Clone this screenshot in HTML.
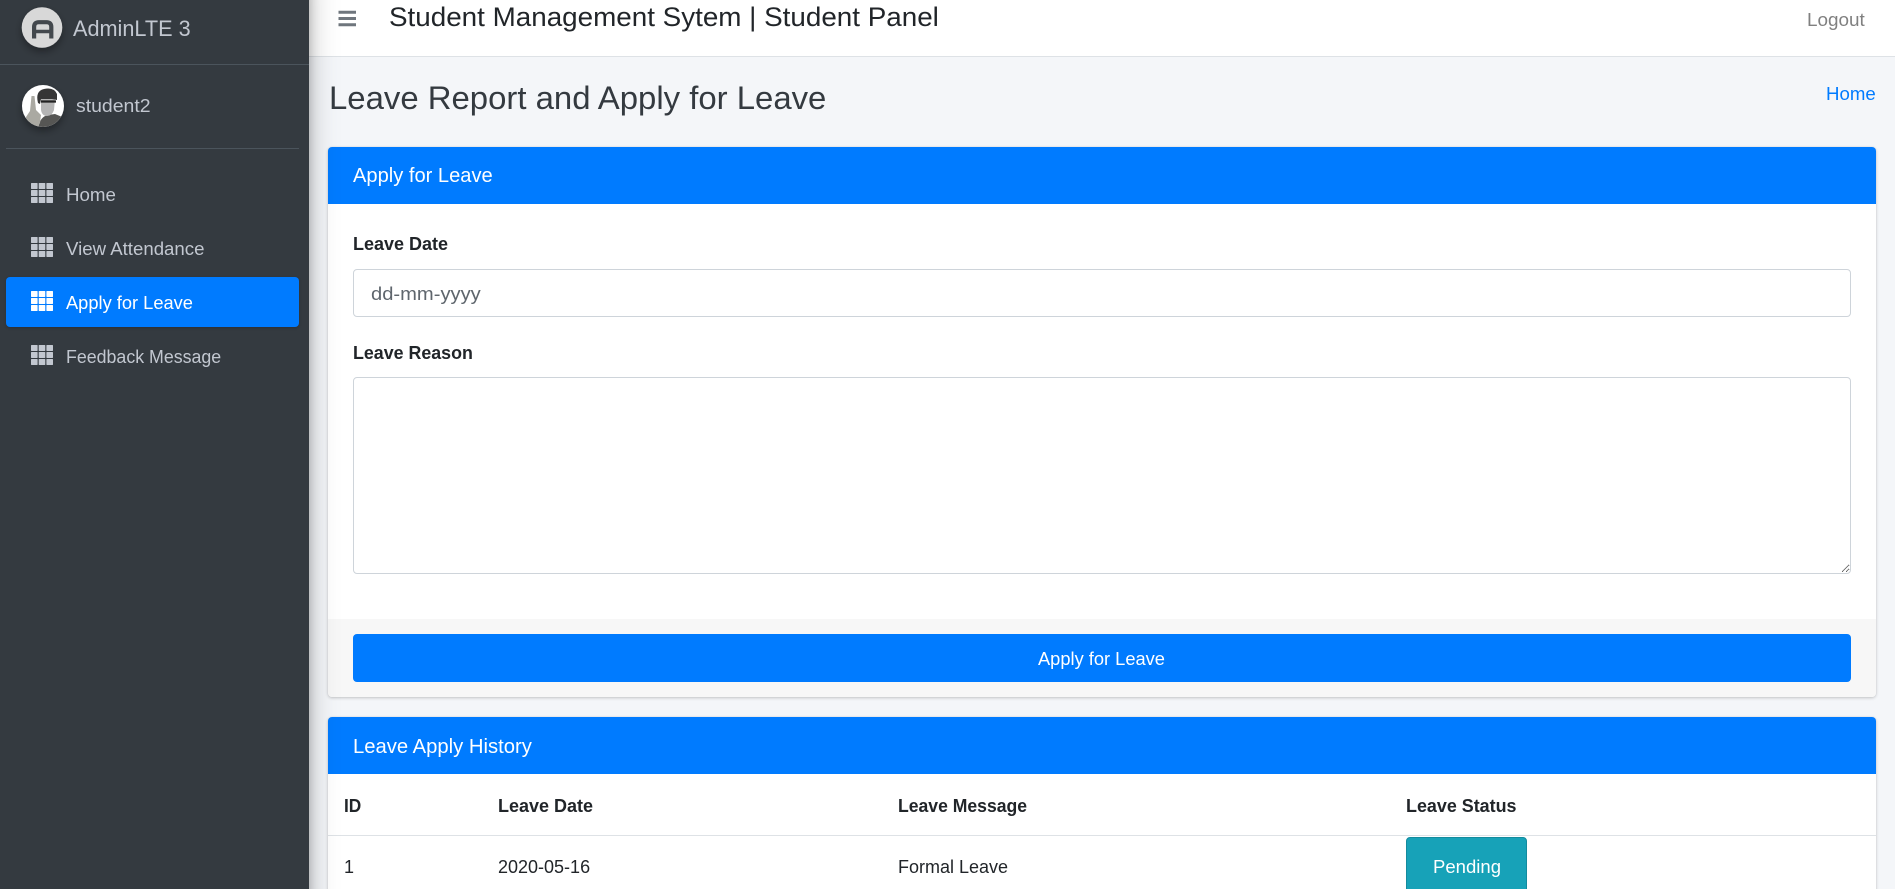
<!DOCTYPE html>
<html lang="en">
<head>
<meta charset="utf-8">
<title>Student Management Sytem | Student Panel</title>
<style>
*{box-sizing:border-box}
html,body{margin:0;padding:0;width:1895px;height:889px;overflow:hidden;background:#f4f6f9;font-family:"Liberation Sans",sans-serif;color:#212529}
#page{position:relative;width:1895px;height:889px;overflow:hidden;background:#f4f6f9}
.t{position:absolute;display:block;line-height:24px;height:24px;white-space:nowrap;font-size:18px;transform-origin:0 50%;margin:0;font-weight:400}
.b{font-weight:700}
#side{position:absolute;left:0;top:-40px;width:309px;height:969px;background:#343a40;box-shadow:0 14px 28px rgba(0,0,0,.25),0 10px 10px rgba(0,0,0,.22);z-index:5}
#sidein{position:absolute;left:0;top:40px;width:309px;height:889px}
#side .t{color:#c2c7d0}
.hr{position:absolute;height:1px;background:#4b545c}
.active{position:absolute;left:6px;top:277px;width:293px;height:50px;background:#007bff;border-radius:4px;box-shadow:0 1px 3px rgba(0,0,0,.2)}
.ic{position:absolute;left:31px;width:22px;height:20px}
#nav{position:absolute;left:309px;top:0;width:1586px;height:57px;background:#fff;border-bottom:1px solid #dee2e6}
.card{position:absolute;left:328px;width:1548px;background:#fff;border-radius:4px;box-shadow:0 0 1px rgba(0,0,0,.125),0 1px 3px rgba(0,0,0,.2)}
.head{position:absolute;left:0;top:0;width:100%;height:57px;background:#007bff;border-radius:4px 4px 0 0}
.foot{position:absolute;left:0;top:472px;width:100%;height:78px;background:#f7f7f7;border-radius:0 0 4px 4px}
.ctl{position:absolute;left:353px;width:1498px;background:#fff;border:1px solid #ced4da;border-radius:4px;display:block;margin:0;padding:0}
.btn{position:absolute;left:353px;top:634px;width:1498px;height:48px;background:#007bff;border-radius:4px}
.rule{position:absolute;left:328px;width:1548px;height:1px;background:#dee2e6}
.pend{position:absolute;left:1406px;top:837px;width:121px;height:70px;background:#17a2b8;border:1px solid #148b9e;border-radius:4px}
</style>
</head>
<body>
<div id="page">
<aside id="side"><div id="sidein">
  <svg style="position:absolute;left:14px;top:0" width="60" height="60" viewBox="14 0 60 60">
    <defs><filter id="s" x="-40%" y="-40%" width="180%" height="180%"><feDropShadow dx="0" dy="4" stdDeviation="4" flood-color="#000" flood-opacity=".35"/></filter></defs>
    <circle cx="42" cy="27.5" r="20.3" fill="#d8d8d8" filter="url(#s)"/>
    <path d="M34.100 38.500V27q0-4.800 4.800-4.800h7.600q4.800 0 4.800 4.800V38.500" fill="none" stroke="#43484d" stroke-width="4.200"/>
    <path d="M34 31.500H51" fill="none" stroke="#43484d" stroke-width="3.400"/>
  </svg>
  <span class="t" style="left:73px;top:17px;font-size:22px;transform:scaleX(.985)">AdminLTE 3</span>
  <div class="hr" style="left:0;top:64px;width:309px"></div>

  <svg style="position:absolute;left:14px;top:78px" width="60" height="60" viewBox="14 78 60 60">
    <defs>
      <filter id="s2" x="-40%" y="-40%" width="180%" height="180%"><feDropShadow dx="0" dy="4" stdDeviation="4" flood-color="#000" flood-opacity=".35"/></filter>
      <clipPath id="c"><circle cx="43" cy="106" r="21"/></clipPath>
    </defs>
    <circle cx="43" cy="106" r="21" fill="#fff" filter="url(#s2)"/>
    <g clip-path="url(#c)">
      <path d="M38 130q1-13 10-15l7-1 12 5v11z" fill="#565654"/>
      <path d="M41 99h14l-1 11q-2 6-7 6-5 0-6-6z" fill="#b5b5b5"/>
      <path d="M38 103q-3-12 6-14 10-2 13 5l0 6-5-1-7 0-4 0-1 5z" fill="#363636"/>
      <path d="M41 101.500h15" stroke="#222" stroke-width="2.200"/>
      <path d="M31.500 96l3 0 1.500 14 5 5-1 8-4 7-9-1-1-12 4-6z" fill="#aaa9a2"/>
    </g>
  </svg>
  <span class="t" style="left:76px;top:94px;transform:scaleX(1.08)">student2</span>
  <div class="hr" style="left:6px;top:148px;width:293px"></div>

  <svg class="ic" style="top:183px" viewBox="0 0 22 20"><g fill="#c2c7d0"><rect width="6.600" height="6" rx=".6"/><rect x="7.700" width="6.600" height="6" rx=".6"/><rect x="15.400" width="6.600" height="6" rx=".6"/><rect y="7" width="6.600" height="6" rx=".6"/><rect x="7.700" y="7" width="6.600" height="6" rx=".6"/><rect x="15.400" y="7" width="6.600" height="6" rx=".6"/><rect y="14" width="6.600" height="6" rx=".6"/><rect x="7.700" y="14" width="6.600" height="6" rx=".6"/><rect x="15.400" y="14" width="6.600" height="6" rx=".6"/></g></svg>
  <span class="t" style="left:66px;top:183px;transform:scaleX(1.04)">Home</span>

  <svg class="ic" style="top:237px" viewBox="0 0 22 20"><g fill="#c2c7d0"><rect width="6.600" height="6" rx=".6"/><rect x="7.700" width="6.600" height="6" rx=".6"/><rect x="15.400" width="6.600" height="6" rx=".6"/><rect y="7" width="6.600" height="6" rx=".6"/><rect x="7.700" y="7" width="6.600" height="6" rx=".6"/><rect x="15.400" y="7" width="6.600" height="6" rx=".6"/><rect y="14" width="6.600" height="6" rx=".6"/><rect x="7.700" y="14" width="6.600" height="6" rx=".6"/><rect x="15.400" y="14" width="6.600" height="6" rx=".6"/></g></svg>
  <span class="t" style="left:66px;top:237px;transform:scaleX(1.035)">View Attendance</span>

  <div class="active"></div>
  <svg class="ic" style="top:291px" viewBox="0 0 22 20"><g fill="#fff"><rect width="6.600" height="6" rx=".6"/><rect x="7.700" width="6.600" height="6" rx=".6"/><rect x="15.400" width="6.600" height="6" rx=".6"/><rect y="7" width="6.600" height="6" rx=".6"/><rect x="7.700" y="7" width="6.600" height="6" rx=".6"/><rect x="15.400" y="7" width="6.600" height="6" rx=".6"/><rect y="14" width="6.600" height="6" rx=".6"/><rect x="7.700" y="14" width="6.600" height="6" rx=".6"/><rect x="15.400" y="14" width="6.600" height="6" rx=".6"/></g></svg>
  <span class="t" style="left:66px;top:291px;transform:scaleX(1.015);color:#fff">Apply for Leave</span>

  <svg class="ic" style="top:345px" viewBox="0 0 22 20"><g fill="#c2c7d0"><rect width="6.600" height="6" rx=".6"/><rect x="7.700" width="6.600" height="6" rx=".6"/><rect x="15.400" width="6.600" height="6" rx=".6"/><rect y="7" width="6.600" height="6" rx=".6"/><rect x="7.700" y="7" width="6.600" height="6" rx=".6"/><rect x="15.400" y="7" width="6.600" height="6" rx=".6"/><rect y="14" width="6.600" height="6" rx=".6"/><rect x="7.700" y="14" width="6.600" height="6" rx=".6"/><rect x="15.400" y="14" width="6.600" height="6" rx=".6"/></g></svg>
  <span class="t" style="left:66px;top:345px;transform:scaleX(.988)">Feedback Message</span>
</div></aside>

<header id="nav"></header>
<svg style="position:absolute;left:338px;top:10px" width="19" height="17" viewBox="0 0 19 17"><path d="M.5 2.200h17.500M.5 8.500h17.500M.5 14.800h17.500" stroke="#6f767d" stroke-width="3"/></svg>
<span class="t" style="left:389px;top:5px;font-size:27px;transform:scaleX(1.03)">Student Management Sytem | Student Panel</span>
<span class="t" style="left:1807px;top:8px;transform:scaleX(1.05);color:#808080">Logout</span>

<h1 class="t" style="left:329px;top:86px;font-size:32.5px;transform:scaleX(1.012);color:#343a40">Leave Report and Apply for Leave</h1>
<span class="t" style="left:1826px;top:82px;transform:scaleX(1.035);color:#007bff">Home</span>

<section class="card" style="top:147px;height:550px">
  <div class="head"></div>
  <div class="foot"></div>
</section>
<span class="t" style="left:353px;top:164px;font-size:20px;transform:scaleX(1.005);color:#fff">Apply for Leave</span>
<span class="t b" style="left:353px;top:232px;transform:scaleX(1)">Leave Date</span>
<div class="ctl" style="top:269px;height:48px"></div>
<span class="t" style="left:371px;top:282px;transform:scaleX(1.12);color:#5f666d">dd-mm-yyyy</span>
<span class="t b" style="left:353px;top:341px;transform:scaleX(.99)">Leave Reason</span>
<textarea class="ctl" style="top:377px;height:197px"></textarea>
<div class="btn"></div>
<span class="t" style="left:1038px;top:647px;transform:scaleX(1.015);color:#fff">Apply for Leave</span>

<section class="card" style="top:717px;height:200px">
  <div class="head"></div>
</section>
<span class="t" style="left:353px;top:735px;font-size:20px;transform:scaleX(1.012);color:#fff">Leave Apply History</span>
<span class="t b" style="left:344px;top:794px;transform:scaleX(.96)">ID</span>
<span class="t b" style="left:498px;top:794px">Leave Date</span>
<span class="t b" style="left:898px;top:794px;transform:scaleX(.977)">Leave Message</span>
<span class="t b" style="left:1406px;top:794px;transform:scaleX(.995)">Leave Status</span>
<div class="rule" style="top:835px"></div>
<span class="t" style="left:344px;top:855px">1</span>
<span class="t" style="left:498px;top:855px">2020-05-16</span>
<span class="t" style="left:898px;top:855px">Formal Leave</span>
<div class="pend"></div>
<span class="t" style="left:1433px;top:855px;transform:scaleX(1.03);color:#fff">Pending</span>
</div>
</body>
</html>
